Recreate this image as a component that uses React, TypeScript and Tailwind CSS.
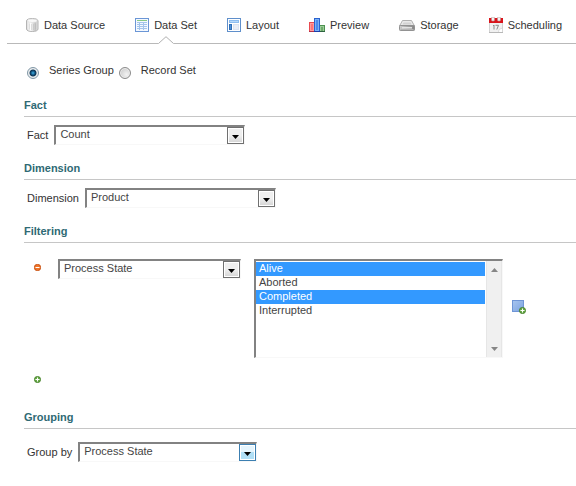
import { useId, useState, type ReactNode } from "react";

function DatabaseIcon() {
  return (
    <svg width="13" height="14" viewBox="0 0 13 14" aria-hidden="true">
      <defs>
        <linearGradient id="db" x1="0" x2="1" y1="0" y2="0">
          <stop offset="0" stopColor="#dcdcdc" />
          <stop offset="0.35" stopColor="#fdfdfd" />
          <stop offset="0.75" stopColor="#c6c6c6" />
          <stop offset="1" stopColor="#e4e4e4" />
        </linearGradient>
      </defs>
      <path d="M.5 3C.5 1.300 3 .5 6.300 .5S12 1.300 12 3v8c0 1.700-2.500 2.500-5.700 2.500S.5 12.700.5 11z" fill="url(#db)" stroke="#b4b4b4" />
      <ellipse cx="6.300" cy="2.800" rx="4.800" ry="1.700" fill="#f8f8f8" stroke="#dadada" strokeWidth=".6" />
      <path d="M3.500 5.500v6M5.500 6v6M7.500 6v6M9.500 5.500v6" stroke="#9a9a9a" strokeOpacity=".25" />
    </svg>
  );
}

function TableIcon() {
  return (
    <svg width="14" height="14" viewBox="0 0 14 14" shapeRendering="crispEdges" aria-hidden="true">
      <rect x=".5" y=".5" width="13" height="13" fill="#f4f9ff" stroke="#6b96d6" />
      <path d="M2 2.500h10" stroke="#86c986" />
      <rect x="2" y="4" width="10" height="8" fill="#a3c4ec" />
      <path d="M2 5h2v1H2zM5 5h3v1H5zM9 5h3v1H9zM2 7h2v1H2zM5 7h3v1H5zM9 7h3v1H9zM2 9h2v1H2zM5 9h3v1H5zM9 9h3v1H9zM2 11h2v1H2zM5 11h3v1H5zM9 11h3v1H9z" fill="#f2f8ff" />
    </svg>
  );
}

function LayoutIcon() {
  return (
    <svg width="14" height="14" viewBox="0 0 14 14" shapeRendering="crispEdges" aria-hidden="true">
      <rect x=".5" y=".5" width="13" height="13" fill="#fff" stroke="#5f8fcb" />
      <rect x="2" y="2" width="10" height="3" fill="#8dbdf0" />
      <rect x="3" y="3" width="8" height="1" fill="#b5d8fa" />
      <rect x="2" y="6" width="3" height="6" fill="#2f6fb8" />
      <rect x="3" y="7" width="1" height="4" fill="#4f91d8" />
      <rect x="6" y="6" width="6" height="6" fill="#dce3f0" />
      <rect x="7" y="7" width="4" height="4" fill="#e8edf6" />
    </svg>
  );
}

function ChartIcon() {
  return (
    <svg width="16" height="14" viewBox="0 0 16 14" shapeRendering="crispEdges" aria-hidden="true">
      <rect x=".5" y="4.500" width="5" height="9" fill="#ff9c9c" stroke="#e84a50" />
      <rect x="2" y="6" width="2" height="6" fill="#ff7577" />
      <rect x="10.500" y="7.500" width="5" height="6" fill="#9ccb98" stroke="#4c9150" />
      <rect x="12" y="9" width="2" height="4" fill="#6cab6b" />
      <rect x="5.500" y=".5" width="5" height="13" fill="#79b1f7" stroke="#2a62cf" />
      <rect x="7" y="2" width="2" height="10" fill="#4c8aec" />
      <path d="M0 13.500h5" stroke="#b1304a" />
      <path d="M5 13.500h6" stroke="#1b3fa8" />
      <path d="M11 13.500h5" stroke="#2d6340" />
    </svg>
  );
}

function DriveIcon() {
  return (
    <svg width="16" height="14" viewBox="0 0 16 14" aria-hidden="true">
      <defs>
        <linearGradient id="drive" x1="0" x2="1">
          <stop offset="0" stopColor="#cfcfcf" />
          <stop offset="1" stopColor="#858585" />
        </linearGradient>
      </defs>
      <path d="M3.500 2.500h9l3 5.500H.5z" fill="#e9e9e9" stroke="#b0b0b0" />
      <path d="M4.500 4.500h7l1 2h-9z" fill="#d2d2d2" />
      <rect x=".5" y="7.500" width="15" height="5" rx=".8" fill="url(#drive)" stroke="#929292" />
      <rect x="3" y="9" width="10" height="1.500" fill="#e3e3e3" />
      <path d="M1.500 11.500h13" stroke="#b5b5b5" />
    </svg>
  );
}

function CalendarIcon() {
  return (
    <svg width="14" height="16" viewBox="0 0 14 16" aria-hidden="true">
      <rect x=".5" y="4" width="13" height="11.500" fill="#f1f1f1" stroke="#d2d2d2" />
      <rect x="0" y="1" width="14" height="5" fill="#d9141b" />
      <rect x="2.500" y="0" width="3" height="4" rx="1" fill="#f4f4f4" stroke="#b98f8f" strokeWidth=".6" />
      <rect x="8.500" y="0" width="3" height="4" rx="1" fill="#f4f4f4" stroke="#b98f8f" strokeWidth=".6" />
      <path d="M4 9l1-1v4.500M6.500 8.300h3l-1.700 4.200" fill="none" stroke="#8c8c8c" />
      <path d="M9.500 15.500l.5-3 3.500-1.500v4.500z" fill="#fff" stroke="#c9c9c9" strokeWidth=".6" />
      <path d="M0 15.500h14" stroke="#b8b8b8" />
    </svg>
  );
}

function RemoveIcon() {
  return (
    <svg width="7" height="7" viewBox="0 0 7 7" aria-hidden="true">
      <circle cx="3.500" cy="3.500" r="3.200" fill="#f0762b" stroke="#c04a0c" strokeWidth=".8" />
      <path d="M1.500 3.500h4" stroke="#fff" />
    </svg>
  );
}

function AddIcon() {
  return (
    <svg width="7" height="7" viewBox="0 0 7 7" aria-hidden="true">
      <circle cx="3.500" cy="3.500" r="3.100" fill="#68ab48" stroke="#3d7a22" strokeWidth=".8" />
      <path d="M1.500 3.500h4M3.500 1.500v4" stroke="#fff" />
    </svg>
  );
}

function AddValueIcon() {
  return (
    <svg width="14" height="14" viewBox="0 0 14 14" aria-hidden="true">
      <defs>
        <linearGradient id="tile" x1="0" x2="1" y1="0" y2="1">
          <stop offset="0" stopColor="#a9c6ef" />
          <stop offset="1" stopColor="#7ba2e0" />
        </linearGradient>
      </defs>
      <rect x=".5" y=".5" width="11" height="11" fill="url(#tile)" stroke="#6f95d6" />
      <circle cx="10.500" cy="10.500" r="3.100" fill="#68ab48" stroke="#3d7a22" strokeWidth=".8" />
      <path d="M8.500 10.500h4M10.500 8.500v4" stroke="#fff" />
    </svg>
  );
}

const tabs: { label: string; icon: ReactNode }[] = [
  { label: "Data Source", icon: <DatabaseIcon /> },
  { label: "Data Set", icon: <TableIcon /> },
  { label: "Layout", icon: <LayoutIcon /> },
  { label: "Preview", icon: <ChartIcon /> },
  { label: "Storage", icon: <DriveIcon /> },
  { label: "Scheduling", icon: <CalendarIcon /> },
];

function TabBar() {
  const [active, setActive] = useState("Data Set");
  return (
    <nav className="ml-[7px] flex h-11 gap-[30px] border-b border-[#b9b9b9] pl-[19px] pt-[7px]">
      {tabs.map((tab) => (
        <button
          key={tab.label}
          type="button"
          onClick={() => setActive(tab.label)}
          className="relative flex h-9 items-center gap-[5px] whitespace-nowrap"
        >
          {tab.icon}
          {tab.label}
          {active === tab.label && (
            <svg className="absolute -bottom-px left-1/2 -translate-x-1/2" width="16" height="8" viewBox="0 0 16 8" aria-hidden="true">
              <path d="M0 8L8 0l8 8z" fill="#fff" />
              <path d="M.5 7.500L8 .7l7.500 6.800" fill="none" stroke="#b0b0b0" />
            </svg>
          )}
        </button>
      ))}
    </nav>
  );
}

function Radio({ label, checked, onSelect }: { label: string; checked: boolean; onSelect: () => void }) {
  return (
    <label className="flex items-start">
      <input
        type="radio"
        name="mode"
        checked={checked}
        onChange={onSelect}
        className="mt-1 size-3 appearance-none rounded-full border border-[#8b8b8b] bg-[radial-gradient(circle_at_65%_65%,#f2f2f2,#c3c3c3)] shadow-[inset_0_0_0_1px_#ededed] checked:border-[#8097a6] checked:bg-[radial-gradient(circle,#3fb4ea_0,#12517d_2px,#0d3350_3px,#e8eff4_4px)]"
      />
      <span className="ml-[10px]">{label}</span>
    </label>
  );
}

function Dropdown({
  options,
  width,
  label,
  name,
  hot = false,
}: {
  options: string[];
  width: string;
  label?: string;
  name?: string;
  hot?: boolean;
}) {
  const id = useId();
  return (
    <div className="flex h-5 items-center">
      {label && (
        <label htmlFor={id} className="mr-[6px]">
          {label}
        </label>
      )}
      <div className={`relative h-5 ${width}`}>
        <select
          id={id}
          aria-label={name}
          className="block h-full w-full appearance-none rounded-none border-b border-l-2 border-r border-t-2 border-b-[#f8f8f8] border-l-[#828282] border-r-[#f8f8f8] border-t-[#828282] bg-white pb-1 pl-1 pr-5 text-[11px] leading-[14px] text-[#444] outline-none"
        >
          {options.map((o) => (
            <option key={o}>{o}</option>
          ))}
        </select>
        <span
          className={`pointer-events-none absolute right-px top-[2px] flex size-[17px] items-center justify-center border p-px pt-[3px] ${
            hot
              ? "border-[#3c7fb1] bg-[linear-gradient(#e6f5fd_50%,#b0dff6_50%)] shadow-[inset_0_0_0_1px_#fff]"
              : "border-[#707070] bg-[linear-gradient(#efefef_50%,#d3d3d3)] shadow-[inset_0_0_0_1px_#fff]"
          }`}
        >
          <svg width="7" height="4" viewBox="0 0 7 4" aria-hidden="true">
            <path d="M0 0h7L3.500 4z" fill="#000" />
          </svg>
        </span>
      </div>
    </div>
  );
}

function Heading({ children }: { children: ReactNode }) {
  return <h2 className="border-b border-[#c6c6c6] pb-1 font-bold text-[#2f6a74]">{children}</h2>;
}

const states = ["Alive", "Aborted", "Completed", "Interrupted"];

function StateList() {
  const [picked, setPicked] = useState(["Alive", "Completed"]);
  return (
    <div className="flex h-[99px] w-[249px] border-b border-l-2 border-r border-t-2 border-b-[#f8f8f8] border-l-[#828282] border-r-[#f8f8f8] border-t-[#828282]">
      <select
        multiple
        size={6}
        aria-label="Process states"
        value={picked}
        onChange={(e) => setPicked(Array.from(e.target.selectedOptions, (o) => o.value))}
        className="h-full min-w-0 flex-1 appearance-none overflow-hidden border-0 bg-white p-0 pt-px text-[11px] leading-[14px] text-[#444] outline-none"
      >
        {states.map((s) => (
          <option
            key={s}
            className="h-[14px] min-h-0 px-[3px] py-0 leading-[14px] checked:bg-[linear-gradient(#3399ff,#3399ff)] checked:[-webkit-text-fill-color:#fff]"
          >
            {s}
          </option>
        ))}
      </select>
      <div className="ml-px flex w-4 flex-col items-center justify-between border-x border-[#e6e6e6] bg-[#f0f0f0] pb-[6px] pt-[7px]">
        <svg width="7" height="4" viewBox="0 0 7 4" aria-hidden="true">
          <path d="M0 4h7L3.500 0z" fill="#868686" />
        </svg>
        <svg width="7" height="4" viewBox="0 0 7 4" aria-hidden="true">
          <path d="M0 0h7L3.500 4z" fill="#868686" />
        </svg>
      </div>
    </div>
  );
}

export default function App() {
  const [mode, setMode] = useState("series");
  return (
    <main className="min-h-screen bg-white font-['Liberation_Sans',Arial,sans-serif] text-[11px] leading-[14px] text-[#333]">
      <TabBar />
      <form className="pl-6">
        <div className="ml-[3px] flex gap-[5px] py-[19px]">
          <Radio label="Series Group" checked={mode === "series"} onSelect={() => setMode("series")} />
          <Radio label="Record Set" checked={mode === "record"} onSelect={() => setMode("record")} />
        </div>

        <section className="pb-4">
          <Heading>Fact</Heading>
          <div className="ml-[3px] mt-2">
            <Dropdown label="Fact" width="w-[191px]" options={["Count"]} />
          </div>
        </section>

        <section className="pb-4">
          <Heading>Dimension</Heading>
          <div className="ml-[3px] mt-2">
            <Dropdown label="Dimension" width="w-[191px]" options={["Product"]} />
          </div>
        </section>

        <section className="pb-[27px]">
          <Heading>Filtering</Heading>
          <div className="mt-4 flex pl-[10px]">
            <button type="button" aria-label="Remove filter" className="flex h-[17px] w-6 items-center">
              <RemoveIcon />
            </button>
            <Dropdown name="Filter by" width="w-[183px]" options={["Process State", "Product"]} />
            <div className="ml-[13px] flex items-center gap-[9px]">
              <StateList />
              <button type="button" aria-label="Add value" className="pb-1">
                <AddValueIcon />
              </button>
            </div>
          </div>
          <button type="button" aria-label="Add filter" className="ml-[10px] mt-[18px] block">
            <AddIcon />
          </button>
        </section>

        <section className="pb-6">
          <Heading>Grouping</Heading>
          <div className="ml-[3px] mt-[13px]">
            <Dropdown label="Group by" width="w-[179px]" options={["Process State", "Product"]} hot />
          </div>
        </section>
      </form>
    </main>
  );
}
